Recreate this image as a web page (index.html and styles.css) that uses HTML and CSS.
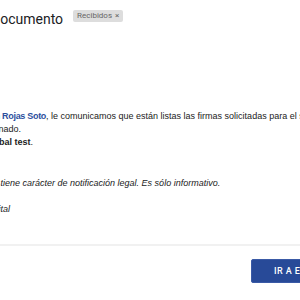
FILE: index.html
```html
<!DOCTYPE html>
<html lang="es">
<head>
    <meta charset="UTF-8">
    <meta name="viewport" content="width=device-width, initial-scale=1.0">
    <title>Documento - Recibidos</title>
    <link rel="stylesheet" href="styles.css">
</head>
<body>
    <div class="mail">
        <!-- Subject -->
        <div class="subject-row">
            <h1 class="subject">Documento</h1>
            <span class="label">Recibidos <span class="label-close">×</span></span>
        </div>

        <!-- Message body -->
        <div class="message">
            <p>Estimado(a) <a href="#" class="name">Juan Rojas Soto</a>, le comunicamos que están listas las firmas solicitadas para el siguiente documento que<br>usted ha seleccionado.<br><b>Documento: Global test</b>.</p>
            <p class="note">Este mensaje no tiene carácter de notificación legal. Es sólo informativo.</p>
            <p class="signature">Equipo Firma Digital</p>
        </div>

        <div class="actions">
            <button class="btn-primary">IR A EXPEDIENTE</button>
        </div>
    </div>
</body>
</html>
```
FILE: styles.css
```css
* {
    margin: 0;
    padding: 0;
    box-sizing: border-box;
}

html, body {
    overflow: hidden;
}

body {
    background: #fff;
    font-family: "Liberation Sans", Arial, sans-serif;
    color: #222;
}

.mail {
    width: 640px;
    margin-left: -71px;
}

/* Subject line */
.subject-row {
    display: flex;
    align-items: flex-start;
    gap: 10px;
    padding: 11px 0 0 62px;
}

.subject {
    font-family: Roboto, sans-serif;
    font-size: 14px;
    font-weight: 400;
    line-height: 16px;
    color: #202124;
}

.label {
    margin-top: -1px;
    padding: 1px 4px;
    background: #ddd;
    border-radius: 2px;
    font-family: Roboto, sans-serif;
    font-size: 8px;
    line-height: 10px;
    color: #666;
}

.label-close {
    margin-left: 1px;
}

/* Body */
.message {
    margin-top: 83px;
    font-size: 9px;
    line-height: 13px;
}

.name {
    color: #2c4f9e;
    font-weight: bold;
    letter-spacing: -0.3px;
    text-decoration: none;
}

.note {
    margin-top: 28px;
    padding-left: 2px;
    font-style: italic;
}

.signature {
    margin-top: 13px;
    font-style: italic;
}

/* Footer actions */
.actions {
    margin-top: 28px;
    padding: 13px 0 0 322px;
    border-top: 2px solid #f1f1f1;
}

.btn-primary {
    height: 24px;
    padding: 0 22px;
    background: #284a98;
    color: #fff;
    border: 1px solid #3a5aa6;
    border-radius: 2px;
    font-family: Roboto, sans-serif;
    font-size: 9px;
    font-weight: 500;
    letter-spacing: 0.4px;
    cursor: pointer;
}
```
